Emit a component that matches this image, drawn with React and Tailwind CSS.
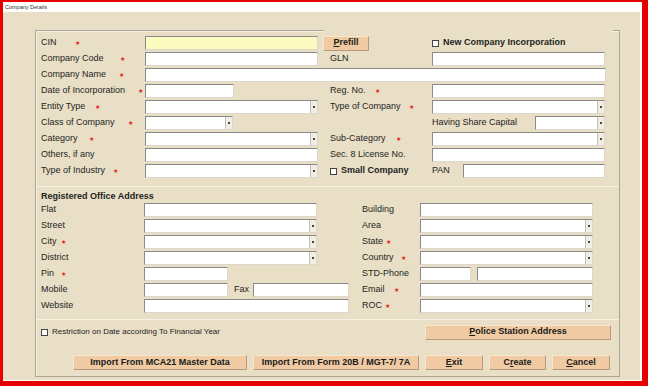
import React from 'react';

const FONT = { fontFamily: '"Liberation Sans", Arial, sans-serif' };

function Label({ text, star, tw, w, bold }) {
  return (
    <div className={`${w} h-full flex items-center shrink-0`}>
      <span className={`${star ? tw : ''} shrink-0 whitespace-nowrap text-[9px] text-[#1e1e1e] ${bold ? 'font-bold' : ''}`}>{text}</span>
      {star && <span className="text-[6px] leading-none text-[#e41c1c]" style={{ fontFamily: '"DejaVu Sans", sans-serif' }}>★</span>}
    </div>
  );
}

function Input({ w, yellow }) {
  return (
    <div className={`${w} h-[14px] shrink-0 border border-[#8a8a88] border-r-[#dbd7cb] border-b-[#dbd7cb] ${yellow ? 'bg-[#fdfcc0]' : 'bg-white'}`} />
  );
}

function Select({ w }) {
  return (
    <div className={`${w} h-[14px] shrink-0 flex justify-end border border-[#8a8a88] border-r-[#dbd7cb] border-b-[#dbd7cb] bg-white`}>
      <span className="w-[7px] h-full bg-[#f0eee6] border-l border-[#c4c0b4] flex items-center justify-center">
        <span className="w-[2px] h-[2px] bg-[#444]" />
      </span>
    </div>
  );
}

function Check({ text, small }) {
  return (
    <div className="flex items-center h-full whitespace-nowrap">
      <span className="w-[7px] h-[7px] border border-[#444] bg-white mr-[4px]" />
      <span className={small ? 'text-[8px] text-[#1e1e1e]' : 'text-[9px] font-bold text-[#1e1e1e]'}>{text}</span>
    </div>
  );
}

function Button({ w, children }) {
  return (
    <div className={`${w} h-[15px] shrink-0 bg-[#efcaa2] border border-[#f8e6cf] border-r-[#b89a7b] border-b-[#b89a7b] flex items-center justify-center text-[9px] font-bold text-[#1a1a1a] whitespace-nowrap`}>
      {children}
    </div>
  );
}

function Row({ children }) {
  return <div className="h-[16px] flex items-center">{children}</div>;
}

export default function App() {
  return (
    <div className="w-[648px] h-[386px] bg-[#e60000] pl-[3px] pt-[2px] pr-[6px] pb-[5px] flex flex-col" style={FONT}>
      <div className="flex-1 flex flex-col bg-white pr-[2px] pb-[1px]">
        <div className="h-[10px] flex items-center pl-[2px] text-[5.5px] text-[#333]">Company Details</div>
        <div className="flex-1 bg-[#e8dfc6] pl-[32px] pt-[18px] pr-[20px] pb-[3px] flex">
          <div className="flex-1 relative flex flex-col border border-[#aba591] shadow-[inset_1px_1px_0_#f6f1e2]">
            {/* gap in the top edge */}
            <span className="absolute top-[-1px] left-[288px] w-[289px] h-[2px] bg-[#e8dfc6]" />

            {/* Company section */}
            <div className="h-[156px] pt-[4px] pl-[5px] border-b border-[#aba591] flex flex-col">
              <Row>
                <Label w="w-[104px]" text="CIN" star tw="w-[34px]" />
                <Input w="w-[173px]" yellow />
                <div className="ml-[5px]"><Button w="w-[46px]"><span><span className="underline">P</span>refill</span></Button></div>
                <div className="ml-[63px]"><Check text="New Company Incorporation" /></div>
              </Row>
              <Row>
                <Label w="w-[104px]" text="Company Code" star tw="w-[79px]" />
                <Input w="w-[173px]" />
                <div className="ml-[12px] flex h-full"><Label w="w-[102px]" text="GLN" /></div>
                <Input w="w-[173px]" />
              </Row>
              <Row>
                <Label w="w-[104px]" text="Company Name" star tw="w-[78px]" />
                <Input w="w-[461px]" />
              </Row>
              <Row>
                <Label w="w-[104px]" text="Date of Incorporation" star tw="w-[97px]" />
                <Input w="w-[89px]" />
                <div className="ml-[96px] flex h-full"><Label w="w-[102px]" text="Reg. No." star tw="w-[45px]" /></div>
                <Input w="w-[173px]" />
              </Row>
              <Row>
                <Label w="w-[104px]" text="Entity Type" star tw="w-[54px]" />
                <Select w="w-[173px]" />
                <div className="ml-[12px] flex h-full"><Label w="w-[102px]" text="Type of Company" star tw="w-[79px]" /></div>
                <Select w="w-[173px]" />
              </Row>
              <Row>
                <Label w="w-[104px]" text="Class of Company" star tw="w-[87px]" />
                <Select w="w-[88px]" />
                <div className="ml-[199px] flex h-full"><Label w="w-[103px]" text="Having Share Capital" /></div>
                <Select w="w-[70px]" />
              </Row>
              <Row>
                <Label w="w-[104px]" text="Category" star tw="w-[48px]" />
                <Select w="w-[173px]" />
                <div className="ml-[12px] flex h-full"><Label w="w-[102px]" text="Sub-Category" star tw="w-[66px]" /></div>
                <Select w="w-[173px]" />
              </Row>
              <Row>
                <Label w="w-[104px]" text="Others, if any" />
                <Input w="w-[173px]" />
                <div className="ml-[12px] flex h-full"><Label w="w-[102px]" text="Sec. 8 License No." /></div>
                <Input w="w-[173px]" />
              </Row>
              <Row>
                <Label w="w-[104px]" text="Type of Industry" star tw="w-[72px]" />
                <Select w="w-[173px]" />
                <div className="ml-[12px] w-[102px] h-full"><Check text="Small Company" /></div>
                <Label w="w-[31px]" text="PAN" />
                <Input w="w-[142px]" />
              </Row>
            </div>

            {/* Registered office section */}
            <div className="h-[133px] pt-[4px] pl-[5px] border-b border-[#aba591] shadow-[0_-1px_0_#f6f1e2] flex flex-col">
              <div className="h-[11px] flex items-center text-[9px] font-bold text-[#1e1e1e]">Registered Office Address</div>
              <Row>
                <Label w="w-[103px]" text="Flat" />
                <Input w="w-[173px]" />
                <div className="ml-[45px] flex h-full"><Label w="w-[58px]" text="Building" /></div>
                <Input w="w-[173px]" />
              </Row>
              <Row>
                <Label w="w-[103px]" text="Street" />
                <Select w="w-[173px]" />
                <div className="ml-[45px] flex h-full"><Label w="w-[58px]" text="Area" /></div>
                <Select w="w-[173px]" />
              </Row>
              <Row>
                <Label w="w-[103px]" text="City" star tw="w-[20px]" />
                <Select w="w-[173px]" />
                <div className="ml-[45px] flex h-full"><Label w="w-[58px]" text="State" star tw="w-[24px]" /></div>
                <Select w="w-[173px]" />
              </Row>
              <Row>
                <Label w="w-[103px]" text="District" />
                <Select w="w-[173px]" />
                <div className="ml-[45px] flex h-full"><Label w="w-[58px]" text="Country" star tw="w-[39px]" /></div>
                <Select w="w-[173px]" />
              </Row>
              <Row>
                <Label w="w-[103px]" text="Pin" star tw="w-[20px]" />
                <Input w="w-[84px]" />
                <div className="ml-[134px] flex h-full"><Label w="w-[58px]" text="STD-Phone" /></div>
                <Input w="w-[51px]" />
                <div className="ml-[6px]"><Input w="w-[116px]" /></div>
              </Row>
              <Row>
                <Label w="w-[103px]" text="Mobile" />
                <Input w="w-[84px]" />
                <div className="ml-[6px] flex h-full"><Label w="w-[19px]" text="Fax" /></div>
                <Input w="w-[96px]" />
                <div className="ml-[13px] flex h-full"><Label w="w-[58px]" text="Email" star tw="w-[32px]" /></div>
                <Input w="w-[173px]" />
              </Row>
              <Row>
                <Label w="w-[103px]" text="Website" />
                <Input w="w-[205px]" />
                <div className="ml-[13px] flex h-full"><Label w="w-[58px]" text="ROC" star tw="w-[23px]" /></div>
                <Select w="w-[173px]" />
              </Row>
            </div>

            {/* Actions */}
            <div className="flex-1 flex flex-col pt-[4px] pl-[5px] shadow-[0_-1px_0_#f6f1e2]">
              <div className="h-[16px] flex items-center">
                <div className="w-[384px] h-full"><Check small text="Restriction on Date according To Financial Year" /></div>
                <Button w="w-[186px]"><span><span className="underline">P</span>olice Station Address</span></Button>
              </div>
              <div className="mt-[15px] flex items-center pl-[32px] gap-x-[6px]">
                <Button w="w-[174px]">Import From MCA21 Master Data</Button>
                <Button w="w-[166px]">Import From Form 20B / MGT-7/ 7A</Button>
                <Button w="w-[58px]"><span><span className="underline">E</span>xit</span></Button>
                <Button w="w-[57px]"><span>C<span className="underline">r</span>eate</span></Button>
                <Button w="w-[58px]"><span><span className="underline">C</span>ancel</span></Button>
              </div>
            </div>
          </div>
        </div>
      </div>
    </div>
  );
}
